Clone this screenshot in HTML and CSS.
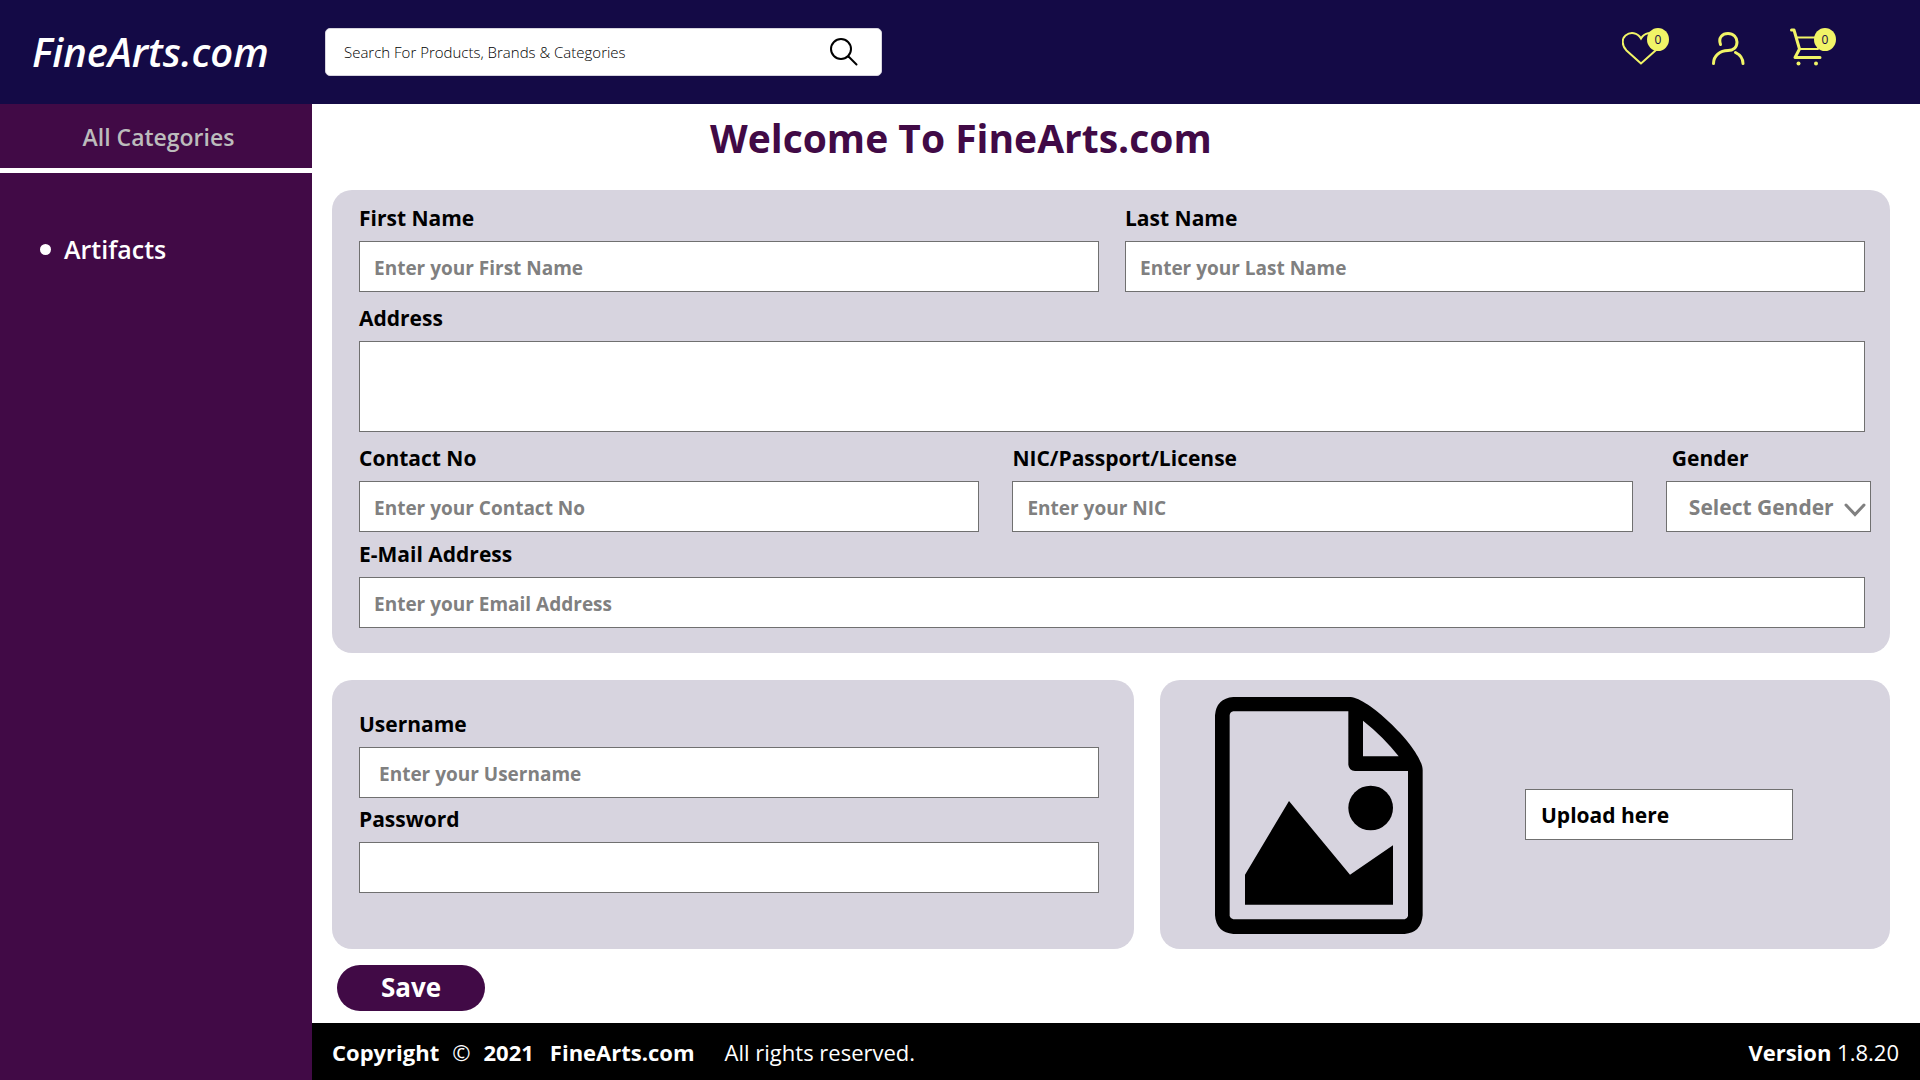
FILE: index.html
```html
<!DOCTYPE html>
<html lang="en">
<head>
<meta charset="utf-8">
<meta name="viewport" content="width=device-width, initial-scale=1">
<title>FineArts.com - Register</title>
<link rel="stylesheet" href="styles.css">
</head>
<body>
<header class="topbar">
  <a class="brand" href="#">FineArts.com</a>
  <form class="search" role="search">
    <input class="search-input" type="search" aria-label="Search" placeholder="Search For Products, Brands &amp; Categories">
    <button class="search-button" type="submit" aria-label="Search">
      <svg width="28" height="28" viewBox="0 0 28 28" fill="none" stroke="#000" stroke-width="2" stroke-linecap="round"><circle cx="11" cy="11" r="10"/><path d="M18.500 18.500 26.500 26.500"/></svg>
    </button>
  </form>
  <nav class="actions" aria-label="Account">
    <a class="action action-counted" href="#" aria-label="Wishlist">
      <svg width="38" height="38" viewBox="0 0 38 38" fill="none" stroke="#f1f467" stroke-width="2"><path d="M19 35.500 4.500 22.500C-.5 17.500-.2 10.500 3.500 7.500 8.500 3.500 15.500 4.500 19 10.500 22.500 4.500 29.500 3.500 34.500 7.500 38.200 10.500 38.500 17.500 33.500 22.500z"/></svg>
      <span class="badge">0</span>
    </a>
    <a class="action" href="#" aria-label="Profile">
      <svg width="34" height="38" viewBox="0 0 34 38" fill="none" stroke="#f1f467" stroke-width="3" stroke-linecap="round"><path d="M8.500 16.500C6 9.500 10.500 5.500 16 5.500 21.500 5.500 25 9.500 25 14 25 19.500 21 22.500 16 22.500 8 22.500 1.500 28 1.500 35.500"/><path d="M23.500 24.500C27.500 26.500 31 30.500 31 35.500"/></svg>
    </a>
    <a class="action action-counted" href="#" aria-label="Cart">
      <svg width="38" height="38" viewBox="0 0 38 38" fill="none" stroke="#f1f467" stroke-width="3" stroke-linecap="round" stroke-linejoin="round"><path d="M2.500 2H5L10.500 21 6 29.500H31"/><path stroke-width="2" d="M7.500 9.500H33L29 21H10.500"/><g fill="#f1f467" stroke="none"><circle cx="9.500" cy="35.500" r="2"/><circle cx="27" cy="35.500" r="2"/></g></svg>
      <span class="badge">0</span>
    </a>
  </nav>
</header>

<div class="layout">
  <aside class="sidebar">
    <a class="all-categories" href="#">All Categories</a>
    <ul class="categories">
      <li class="category"><a class="category-link" href="#">Artifacts</a></li>
    </ul>
  </aside>

  <div class="page">
    <main class="content">
      <h1 class="title">Welcome To FineArts.com</h1>
      <form class="form">
        <section class="card details">
          <div class="row row-names">
            <div class="field">
              <label class="label" for="first-name">First Name</label>
              <input class="control" id="first-name" type="text" placeholder="Enter your First Name">
            </div>
            <div class="field">
              <label class="label" for="last-name">Last Name</label>
              <input class="control" id="last-name" type="text" placeholder="Enter your Last Name">
            </div>
          </div>
          <div class="row">
            <div class="field">
              <label class="label" for="address">Address</label>
              <textarea class="control control-area" id="address"></textarea>
            </div>
          </div>
          <div class="row row-contact">
            <div class="field">
              <label class="label" for="contact">Contact No</label>
              <input class="control" id="contact" type="tel" placeholder="Enter your Contact No">
            </div>
            <div class="field">
              <label class="label" for="nic">NIC/Passport/License</label>
              <input class="control" id="nic" type="text" placeholder="Enter your NIC">
            </div>
            <div class="field">
              <label class="label label-gender" for="gender">Gender</label>
              <div class="select-wrap">
                <select class="control control-select" id="gender">
                  <option>Select Gender</option>
                  <option>Female</option>
                  <option>Male</option>
                </select>
                <svg class="chevron" width="22" height="14" viewBox="0 0 22 14" fill="none" stroke="#808080" stroke-width="3" stroke-linecap="round"><path d="M2 2 11 11.500 20 2"/></svg>
              </div>
            </div>
          </div>
          <div class="row row-email">
            <div class="field">
              <label class="label" for="email">E-Mail Address</label>
              <input class="control" id="email" type="email" placeholder="Enter your Email Address">
            </div>
          </div>
        </section>

        <div class="lower">
          <section class="card account">
            <div class="field">
              <label class="label" for="username">Username</label>
              <input class="control control-username" id="username" type="text" placeholder="Enter your Username">
            </div>
            <div class="field">
              <label class="label" for="password">Password</label>
              <input class="control" id="password" type="password">
            </div>
          </section>
          <section class="card upload">
            <svg class="picture" width="208" height="237" viewBox="225 81 624 711"><path fill-rule="evenodd" d="M280 81H632C690 85 848 240 848 300V736Q844 788 794 792H280Q229 788 225 736V136Q229 85 280 81zM280 124Q270 126 269 136V738Q271 746 280 748H794Q802 746 804 738V303H645Q627 301 625 284V124zM669 152V259H776Q730 200 669 152z"/><circle cx="692" cy="414" r="67"/><path d="M447 393 315 614V704H759V526L630 614z"/></svg>
            <button class="upload-button" type="button">Upload here</button>
          </section>
        </div>
        <button class="save" type="submit">Save</button>
      </form>
    </main>

    <footer class="footer">
      <p class="copyright"><b>Copyright</b><span>©</span><b>2021</b><b class="owner">FineArts.com</b><span class="rights">All rights reserved.</span></p>
      <p class="version"><b>Version</b> 1.8.20</p>
    </footer>
  </div>
</div>
</body>
</html>
```

FILE: styles.css
```css
*, *::before, *::after { box-sizing: border-box; }

body {
  margin: 0;
  min-height: 100vh;
  display: flex;
  flex-direction: column;
  background: #fff;
  color: #000;
  font-family: "Open Sans", "Noto Sans", sans-serif;
}

a { color: inherit; text-decoration: none; }
p { margin: 0; }
svg { display: block; }
button, input, select, textarea { font-family: inherit; }

.topbar {
  display: flex;
  align-items: flex-start;
  padding: 28px 84px 28px 32px;
  background: #140a46;
}

.brand {
  flex: 0 0 293px;
  color: #fff;
  font-size: 40px;
  line-height: 48px;
  font-weight: 600;
  font-style: italic;
}

.search {
  flex: 0 1 557px;
  display: flex;
  align-items: center;
  height: 48px;
  padding-right: 23px;
  border: 1px solid #d7d4df;
  border-radius: 5px;
  background: #fff;
}

.search-input {
  flex: 1;
  min-width: 0;
  height: 100%;
  padding: 0 0 0 18px;
  border: 0;
  background: none;
  outline: none;
  font-size: 15px;
}

.search-input::placeholder { color: #000; font-weight: 300; opacity: 1; }

.search-button { padding: 0; border: 0; background: none; }

.actions { display: flex; gap: 43px; margin-left: auto; }
.action { position: relative; }
.action-counted { width: 47px; }

.badge {
  position: absolute;
  top: 0;
  right: 0;
  width: 22px;
  height: 23px;
  border-radius: 50%;
  background: #f1f467;
  color: #140a46;
  font-size: 12px;
  line-height: 23px;
  font-weight: 400;
  text-align: center;
}

.layout {
  flex: 1;
  display: grid;
  grid-template-columns: 312px minmax(0, 1fr);
}

.sidebar { background: #410a46; }

.all-categories {
  display: block;
  padding: 17px 0 15px 5px;
  border-bottom: 5px solid #fff;
  color: #bcbcbc;
  font-size: 23px;
  line-height: 32px;
  font-weight: 600;
  text-align: center;
}

.categories { margin: 60px 0 0; padding: 0 0 0 40px; list-style: none; }

.category {
  display: flex;
  align-items: center;
  gap: 13px;
  color: #fff;
  font-size: 25px;
  line-height: 32px;
  font-weight: 600;
}

.category::before {
  content: "";
  width: 11px;
  height: 11px;
  border-radius: 50%;
  background: #fff;
}

.page { display: flex; flex-direction: column; min-width: 0; }
.content { flex: 1; padding: 0 30px 12px 20px; }

.title {
  margin: 0 0 18px;
  padding-left: 378px;
  color: #410a46;
  font-size: 39px;
  line-height: 68px;
  font-weight: 700;
}

.card { border-radius: 20px; background: #d7d4df; }

.details {
  display: flex;
  flex-direction: column;
  gap: 13px;
  padding: 15px 19px 25px 27px;
}

.row { display: grid; padding-right: 6px; }
.row-names { grid-template-columns: 1fr 1fr; gap: 26px; }
.row-contact { grid-template-columns: 620fr 620fr 205fr; gap: 33px; padding-right: 0; }
.row-email { margin-top: -4px; }

.field { display: flex; flex-direction: column; gap: 10px; min-width: 0; }

.label { font-size: 21px; line-height: 26px; font-weight: 700; }
.label-gender { padding-left: 6px; }

.control {
  width: 100%;
  height: 51px;
  margin: 0;
  padding: 2px 14px 0;
  border: 1px solid #707070;
  border-radius: 0;
  background: #fff;
  font-size: 19px;
  font-weight: 700;
}

.control::placeholder { color: #808080; opacity: 1; }

.control-area { display: block; height: 91px; resize: none; }
.control-username { padding-left: 19px; }

.select-wrap { position: relative; }

.control-select {
  appearance: none;
  padding: 0 20px 0 22px;
  color: #808080;
  font-size: 21px;
}

.chevron { position: absolute; top: 22px; right: 5px; pointer-events: none; }

.lower {
  display: grid;
  grid-template-columns: 802fr 730fr;
  gap: 26px;
  margin-top: 27px;
}

.account {
  display: flex;
  flex-direction: column;
  gap: 8px;
  padding: 31px 35px 56px 27px;
}

.upload {
  display: flex;
  align-items: center;
  gap: 102px;
  padding: 0 55px;
}

.picture { flex: none; margin-top: 2px; }

.upload-button {
  flex: 0 1 268px;
  height: 51px;
  padding: 0 15px;
  border: 1px solid #707070;
  background: #fff;
  color: #000;
  font-size: 21px;
  font-weight: 700;
  text-align: left;
}

.save {
  display: block;
  width: 148px;
  height: 46px;
  margin: 16px 0 0 5px;
  padding: 0 0 2px;
  border: 0;
  border-radius: 23px;
  background: #410a46;
  color: #fff;
  font-size: 26px;
  font-weight: 700;
}

.footer {
  display: flex;
  align-items: center;
  justify-content: space-between;
  min-height: 57px;
  padding: 0 21px 0 20px;
  background: #000;
  color: #fff;
  font-size: 22px;
  line-height: 30px;
}

.copyright { display: flex; gap: 13px; }
.owner { margin-left: 3px; }
.rights { margin-left: 17px; }
```
